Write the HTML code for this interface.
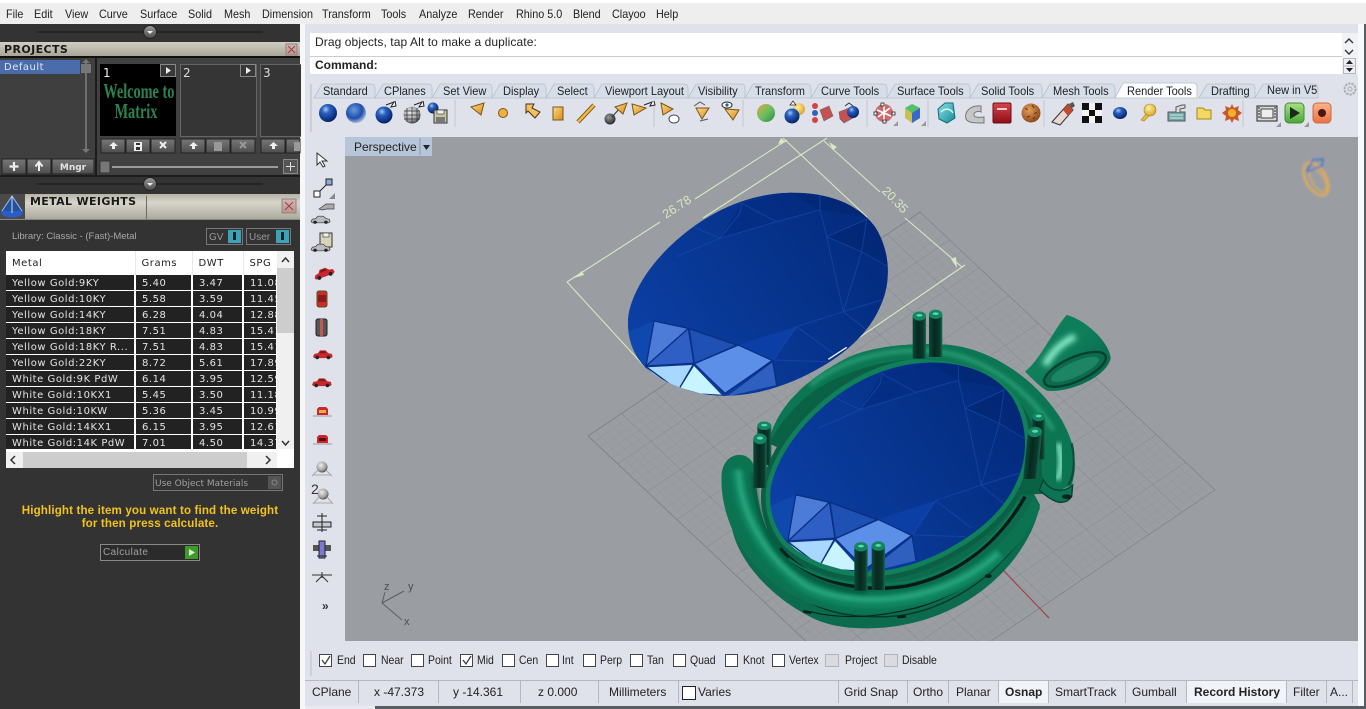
<!DOCTYPE html>
<html><head><meta charset="utf-8"><title>Rhino Matrix</title>
<style>
html,body{margin:0;padding:0;width:1366px;height:709px;overflow:hidden;background:#dfe2ea}
body{position:relative;font-family:"Liberation Sans",sans-serif;font-size:12px;color:#222}
.a{position:absolute}
.t{position:absolute;white-space:nowrap;line-height:14px}
.m{transform:scaleX(.9);transform-origin:0 50%}
.n{transform:scaleX(.92);transform-origin:0 50%}
.s{transform:scaleX(.87);transform-origin:0 50%}
.d{font-family:"DejaVu Sans",sans-serif}
svg{position:absolute;left:0;top:0}
table{border-collapse:collapse;table-layout:fixed;width:271px;font-family:"DejaVu Sans",sans-serif;font-size:10px;letter-spacing:.55px}
td,th{overflow:hidden;white-space:nowrap;text-align:left;font-weight:normal}
th{padding:2px 0 0 6px;height:22px;line-height:22px;background:#fff;color:#222;border-right:1px solid #e8e8e8}
td{padding:2px 0 0 6px;height:13px;line-height:13px;background:#222;color:#e4e4e4;border-right:2px solid #fff;border-bottom:1px solid #fff}
</style></head><body>

<div class="a" style="left:0;top:0;width:1366px;height:3px;background:#fff"></div>
<div class="a" style="left:0;top:3px;width:1366px;height:21px;background:#eeeeee"></div>
<span class="t m" style="left:6px;top:7px">File</span><span class="t m" style="left:34px;top:7px">Edit</span><span class="t m" style="left:65px;top:7px">View</span><span class="t m" style="left:99px;top:7px">Curve</span><span class="t m" style="left:140px;top:7px">Surface</span><span class="t m" style="left:188px;top:7px">Solid</span><span class="t m" style="left:224px;top:7px">Mesh</span><span class="t m" style="left:262px;top:7px">Dimension</span><span class="t m" style="left:322px;top:7px">Transform</span><span class="t m" style="left:381px;top:7px">Tools</span><span class="t m" style="left:419px;top:7px">Analyze</span><span class="t m" style="left:468px;top:7px">Render</span><span class="t m" style="left:516px;top:7px">Rhino 5.0</span><span class="t m" style="left:573px;top:7px">Blend</span><span class="t m" style="left:612px;top:7px">Clayoo</span><span class="t m" style="left:656px;top:7px">Help</span>

<!-- left panel -->
<div class="a" style="left:0;top:24px;width:300px;height:685px;background:#333"></div>
<div class="a" style="left:300px;top:24px;width:5px;height:685px;background:#f6f7f9"></div>
<div class="a" style="left:0;top:42px;width:300px;height:14px;background:linear-gradient(#d0cec2,#a9a698)"></div>
<div class="a" style="left:0;top:56px;width:300px;height:2px;background:#111"></div>
<span class="t d" style="left:4px;top:43px;font-weight:bold;font-size:11px;color:#1a1a1a;letter-spacing:.4px">PROJECTS</span>
<div class="a" style="left:0;top:58px;width:95px;height:117px;background:#3f3f3f"></div>
<div class="a" style="left:97px;top:58px;width:203px;height:117px;background:#414141"></div>
<div class="a" style="left:95px;top:58px;width:2px;height:118px;background:#1c1c1c"></div>
<div class="a" style="left:0;top:175px;width:300px;height:2px;background:#1c1c1c"></div>
<div class="a" style="left:0;top:60px;width:80px;height:14px;background:#4a6cab"></div>
<span class="t d" style="left:4px;top:61px;font-size:10px;color:#dfe6f4;letter-spacing:.5px">Default</span>
<!-- thumbnails -->
<div class="a" style="left:100px;top:64px;width:76px;height:72px;background:#000"></div>
<div class="a" style="left:180px;top:64px;width:75px;height:71px;background:#353535;border:1px solid #666"></div>
<div class="a" style="left:260px;top:64px;width:40px;height:71px;background:#353535;border:1px solid #666;border-right:0"></div>
<span class="t d" style="left:103px;top:66px;color:#eee;font-size:12px">1</span>
<span class="t d" style="left:183px;top:66px;color:#ddd;font-size:12px">2</span>
<span class="t d" style="left:263px;top:66px;color:#ddd;font-size:12px">3</span>
<span class="t" style="left:88px;top:81px;width:96px;text-align:center;font-family:'Liberation Serif',serif;font-weight:bold;font-size:21px;line-height:20px;color:#2a8452;transform:scaleX(.68)">Welcome to<br>Matrix</span>

<!-- metal weights -->
<div class="a" style="left:25px;top:194px;width:275px;height:25px;background:linear-gradient(#b5b2a6,#d8d6cc 35%,#aba89b)"></div>
<div class="a" style="left:0;top:219px;width:300px;height:1px;background:#888"></div>
<div class="a" style="left:146px;top:196px;width:1px;height:23px;background:#6e6c62"></div>
<span class="t d" style="left:30px;top:195px;font-weight:bold;font-size:11px;color:#1a1a1a;letter-spacing:.35px">METAL WEIGHTS</span>
<span class="t" style="left:12px;top:230px;font-size:9.5px;color:#a8a8a8">Library: Classic - (Fast)-Metal</span>
<div class="a" style="left:206px;top:228px;width:35px;height:15px;border:1px solid #777"></div>
<div class="a" style="left:246px;top:228px;width:43px;height:15px;border:1px solid #777"></div>
<span class="t" style="left:209px;top:231px;font-size:10px;color:#999">GV</span>
<span class="t" style="left:249px;top:231px;font-size:10px;color:#999">User</span>
<div class="a" style="left:228px;top:230px;width:13px;height:13px;background:#3aa3b5"></div>
<div class="a" style="left:276px;top:230px;width:13px;height:13px;background:#3aa3b5"></div>
<div class="a" style="left:233px;top:232px;width:3px;height:8px;background:#123"></div>
<div class="a" style="left:281px;top:232px;width:3px;height:8px;background:#123"></div>

<div class="a" style="left:6px;top:251px;width:288px;height:217px;background:#fff"></div>
<div class="a" style="left:6px;top:251px;width:271px;height:198px;overflow:hidden">
<table><colgroup><col style="width:129px"><col style="width:57px"><col style="width:51px"><col style="width:34px"></colgroup>
<tr><th>Metal</th><th>Grams</th><th>DWT</th><th>SPG</th></tr>
<tr><td>Yellow Gold:9KY</td><td>5.40</td><td>3.47</td><td>11.08</td></tr>
<tr><td>Yellow Gold:10KY</td><td>5.58</td><td>3.59</td><td>11.45</td></tr>
<tr><td>Yellow Gold:14KY</td><td>6.28</td><td>4.04</td><td>12.88</td></tr>
<tr><td>Yellow Gold:18KY</td><td>7.51</td><td>4.83</td><td>15.41</td></tr>
<tr><td>Yellow Gold:18KY R...</td><td>7.51</td><td>4.83</td><td>15.41</td></tr>
<tr><td>Yellow Gold:22KY</td><td>8.72</td><td>5.61</td><td>17.89</td></tr>
<tr><td>White Gold:9K PdW</td><td>6.14</td><td>3.95</td><td>12.59</td></tr>
<tr><td>White Gold:10KX1</td><td>5.45</td><td>3.50</td><td>11.18</td></tr>
<tr><td>White Gold:10KW</td><td>5.36</td><td>3.45</td><td>10.99</td></tr>
<tr><td>White Gold:14KX1</td><td>6.15</td><td>3.95</td><td>12.61</td></tr>
<tr><td>White Gold:14K PdW</td><td>7.01</td><td>4.50</td><td>14.37</td></tr>
</table></div>
<div class="a" style="left:277px;top:251px;width:17px;height:198px;background:#f0f0f0"></div>
<div class="a" style="left:277px;top:268px;width:17px;height:65px;background:#cdcdcd"></div>
<div class="a" style="left:6px;top:452px;width:271px;height:16px;background:#f0f0f0"></div>
<div class="a" style="left:23px;top:452px;width:224px;height:16px;background:#cdcdcd"></div>
<div class="a" style="left:153px;top:474px;width:128px;height:15px;border:1px solid #777"></div>
<span class="t d" style="left:155px;top:477px;font-size:9px;color:#a0a0a0">Use Object Materials</span>
<div class="a" style="left:268px;top:476px;width:13px;height:13px;background:#555"></div>
<span class="t" style="left:0;top:504px;width:300px;text-align:center;font-weight:bold;font-size:11.6px;line-height:13px;color:#f3c31c;white-space:normal;letter-spacing:.13px">Highlight the item you want to find the weight<br>for then press calculate.</span>
<div class="a" style="left:100px;top:544px;width:98px;height:15px;border:1px solid #888;background:#2b2b2b"></div>
<span class="t" style="left:103px;top:546px;font-size:10px;color:#a0a0a0;letter-spacing:.4px">Calculate</span>
<div class="a" style="left:185px;top:546px;width:13px;height:13px;background:#3f9a2c"></div>

<!-- command area -->
<div class="a" style="left:310px;top:33px;width:1048px;height:41px;background:#fff"></div>
<div class="a" style="left:310px;top:56px;width:1048px;height:1px;background:#c9ccd3"></div>
<div class="a" style="left:1342px;top:33px;width:16px;height:41px;background:#f1f2f5"></div>
<span class="t" style="left:315px;top:35px;letter-spacing:.09px">Drag objects, tap Alt to make a duplicate:</span>
<span class="t" style="left:315px;top:58px;font-weight:bold">Command:</span>

<!-- main graphics -->
<svg width="1366" height="709" viewBox="0 0 1366 709">
<defs>
<radialGradient id="bl" cx=".38" cy=".3" r=".75"><stop offset="0" stop-color="#a8c8f0"/><stop offset=".3" stop-color="#2a62c0"/><stop offset=".8" stop-color="#0c2f80"/><stop offset="1" stop-color="#051a4a"/></radialGradient>
<radialGradient id="bb" cx=".4" cy=".35" r=".7"><stop offset="0" stop-color="#6e98dd"/><stop offset=".6" stop-color="#1c4fae"/><stop offset="1" stop-color="#c0cce0"/></radialGradient>
<radialGradient id="gr" cx=".4" cy=".35" r=".7"><stop offset="0" stop-color="#eee"/><stop offset=".7" stop-color="#999"/><stop offset="1" stop-color="#333"/></radialGradient>
<radialGradient id="dk" cx=".4" cy=".35" r=".7"><stop offset="0" stop-color="#999"/><stop offset="1" stop-color="#222"/></radialGradient>
<linearGradient id="mc" x1="0" y1="0" x2="1" y2="1"><stop offset="0" stop-color="#e8a040"/><stop offset=".5" stop-color="#6cc060"/><stop offset="1" stop-color="#2a8a40"/></linearGradient>
<radialGradient id="br" cx=".4" cy=".35" r=".7"><stop offset="0" stop-color="#e2a060"/><stop offset="1" stop-color="#8a4414"/></radialGradient>
<radialGradient id="ye" cx=".4" cy=".35" r=".7"><stop offset="0" stop-color="#fff0a0"/><stop offset="1" stop-color="#d8a020"/></radialGradient>
<linearGradient id="or" x1="0" y1="0" x2="1" y2="1"><stop offset="0" stop-color="#f8dc8a"/><stop offset="1" stop-color="#d88a18"/></linearGradient>
<linearGradient id="pk" x1="0" y1="0" x2="0" y2="1"><stop offset="0" stop-color="#d8b4b0"/><stop offset="1" stop-color="#c48f8a"/></linearGradient>
<linearGradient id="kn" x1="0" y1="0" x2="0" y2="1"><stop offset="0" stop-color="#9a9a9a"/><stop offset="1" stop-color="#4a4a4a"/></linearGradient>
<linearGradient id="bt" x1="0" y1="0" x2="0" y2="1"><stop offset="0" stop-color="#777"/><stop offset="1" stop-color="#4d4d4d"/></linearGradient>
<linearGradient id="bale" x1="0" y1="0" x2="1" y2="1"><stop offset="0" stop-color="#0c7a58"/><stop offset=".45" stop-color="#0f7f5a"/><stop offset="1" stop-color="#0a5f45"/></linearGradient>
<linearGradient id="teal" x1="0" y1="0" x2="1" y2="1"><stop offset="0" stop-color="#8ee0e4"/><stop offset="1" stop-color="#128a98"/></linearGradient>
<linearGradient id="red" x1="0" y1="0" x2="0" y2="1"><stop offset="0" stop-color="#d8444c"/><stop offset="1" stop-color="#8a1018"/></linearGradient>
<linearGradient id="grb" x1="0" y1="0" x2="0" y2="1"><stop offset="0" stop-color="#a8e088"/><stop offset="1" stop-color="#48a838"/></linearGradient>
<linearGradient id="orb" x1="0" y1="0" x2="0" y2="1"><stop offset="0" stop-color="#fbb48c"/><stop offset="1" stop-color="#ec7040"/></linearGradient>
<linearGradient id="pr" x1="0" y1="0" x2="1" y2="0"><stop offset="0" stop-color="#0a4a38"/><stop offset=".4" stop-color="#08281f"/><stop offset=".8" stop-color="#0a3a2c"/><stop offset="1" stop-color="#186a52"/></linearGradient>
<linearGradient id="gb" gradientUnits="userSpaceOnUse" x1="250" y1="700" x2="950" y2="250"><stop offset="0" stop-color="#0c3fa6"/><stop offset=".5" stop-color="#07358f"/><stop offset="1" stop-color="#032a7c"/></linearGradient>
<pattern id="g1" width="2" height="2" patternUnits="userSpaceOnUse"><path d="M0 0H2M0 0V2" stroke="#868a8f" stroke-width=".1" fill="none"/></pattern>
<pattern id="g2" width="10" height="10" patternUnits="userSpaceOnUse"><path d="M0 0H10M0 0V10" stroke="#777b80" stroke-width=".14" fill="none"/></pattern>
<filter id="b2" x="-30%" y="-30%" width="160%" height="160%"><feGaussianBlur stdDeviation="9"/></filter>
<filter id="b1" x="-30%" y="-30%" width="160%" height="160%"><feGaussianBlur stdDeviation="6"/></filter>
<filter id="s1"><feGaussianBlur stdDeviation="1"/></filter>
<clipPath id="vp"><rect x="345" y="137" width="1013" height="504"/></clipPath>
<path id="gout" d="M690,188 C790,185 890,215 945,290 C990,360 995,450 965,520 C930,610 850,680 740,735 C650,780 560,800 480,797 C400,795 310,760 255,712 C215,670 198,610 205,555 C220,470 290,370 400,290 C490,225 590,190 690,188Z"/>
<clipPath id="gc"><path d="M690,188 C790,185 890,215 945,290 C990,360 995,450 965,520 C930,610 850,680 740,735 C650,780 560,800 480,797 C400,795 310,760 255,712 C215,670 198,610 205,555 C220,470 290,370 400,290 C490,225 590,190 690,188Z"/></clipPath>
<g id="gem"><g clip-path="url(#gc)">
<use href="#gout" fill="url(#gb)"/>
<polygon points="545,220 690,188 780,240 650,275 480,325" fill="#032c80" opacity=".6"/>
<polygon points="690,188 780,197 880,220 920,262 780,240" fill="#02266f" opacity=".6"/>
<polygon points="800,320 920,268 905,365" fill="#02256f" opacity=".6"/>
<polygon points="920,262 990,320 990,420 905,365" fill="#02266f" opacity=".5"/>
<polygon points="282,573 385,595 258,708" fill="#4c7cd8"/>
<polygon points="385,595 400,698 258,708" fill="#2f5fc4"/>
<polygon points="282,573 258,708 215,670 195,610" fill="#0f49ae"/>
<polygon points="390,597 525,645 405,698" fill="#1f50b4"/>
<polygon points="535,645 635,690 495,790 405,700" fill="#5b8fe8"/>
<polygon points="637,697 650,765 500,800" fill="#2f60c0"/>
<polygon points="258,712 398,705 358,775 300,750" fill="#a8d8ff"/>
<polygon points="402,708 490,800 420,800 360,775" fill="#c8f4ff"/>
<polygon points="530,645 710,590 640,690" fill="#0c3fa6"/>
<g fill="none" stroke="#1a4fb6" stroke-width="3" opacity=".6">
<path d="M545,220 650,275 780,240 780,197M650,275 480,325 400,290M780,240 800,320 920,268 905,365 800,320M905,365 850,545 710,590 820,670M850,545 965,510M905,365 983,410M545,220 540,250 480,325 350,380M800,320 850,545M710,590 640,690 800,695M850,545 920,600"/>
</g>
<g fill="none" stroke="#0b2f80" stroke-width="4">
<path d="M282,573 258,708 402,700 385,595 282,573M385,595 258,708M402,700 360,772M402,702 495,790 638,692 650,765M405,700 535,645 638,692M385,595 530,645M258,710 340,770 420,792 500,797"/>
</g></g>
</g>
<g id="prong"><rect x="0" y="8" width="40" height="130" fill="url(#pr)"/><ellipse cx="20" cy="10" rx="20" ry="14" fill="#148562"/><ellipse cx="20" cy="8" rx="9" ry="4" fill="#5ed6ad"/></g>
<g id="car"><path d="M0 11 2 7 7 6 10 2H18L22 6 27 7 28 11 26 13H2Z" fill="#c8282c"/><path d="M11 3H17L19 6H9Z" fill="#7a1a1a"/><circle cx="6" cy="12" r="2.6" fill="#222"/><circle cx="22" cy="12" r="2.6" fill="#222"/></g>
</defs>

<!-- viewport -->
<rect x="345" y="137" width="1013" height="504" fill="#9a9ea3"/>
<rect x="345" y="137" width="87" height="19" fill="#b7c5d8"/>
<g clip-path="url(#vp)">
<g transform="matrix(3.32,-2.24,2.95,2.78,588,436)"><rect width="100" height="100" fill="url(#g1)"/><rect width="100" height="100" fill="url(#g2)"/><path d="M0 0H100V100H0Z" fill="none" stroke="#777b80" stroke-width=".14"/></g>
<line x1="1003" y1="570" x2="1049" y2="618" stroke="#a4403e" stroke-width="1.2"/>
<!-- dims -->
<g stroke="#d6e9bf" stroke-width="1.1" fill="none">
<path d="M567,282 660,222M695,199 787,140M567,282 645,367M783,138 867,217M827,138 703,218M824,141 880,192M905,218 962,267M965,265 828,359"/>
</g>
<path d="M574,278l8,-7 2,4zM786,142l-8,2 3,-6zM829,142l8,5 -4,3zM957,268l-6,-9 5,-2z" fill="#d6e9bf"/>
<g transform="translate(560,130) scale(.33333)"><use href="#gem"/><path d="M805,688 L860,652" stroke="#f2f6ff" stroke-width="4"/></g>
<text x="677" y="211" transform="rotate(-33 677 207)" font-family="Liberation Sans,sans-serif" font-size="12.5" fill="#d6e9bf" text-anchor="middle">26.78</text>
<text x="895" y="204" transform="rotate(46 895 200)" font-family="Liberation Sans,sans-serif" font-size="12.5" fill="#d6e9bf" text-anchor="middle">20.35</text>

<!-- pendant, drawn in 3x crop coordinates -->
<g transform="translate(700,300) scale(.33333)">
<!-- bale -->
<path d="M975,215 C1020,180 1060,90 1100,45 C1160,60 1230,130 1232,175 C1220,230 1110,280 1040,272 C1020,260 1000,240 975,215Z" fill="url(#bale)"/>
<ellipse cx="1125" cy="208" rx="100" ry="36" transform="rotate(-24 1125 208)" fill="#0c6b4d" stroke="#06402e" stroke-width="7"/>
<ellipse cx="1125" cy="208" rx="78" ry="22" transform="rotate(-24 1125 208)" fill="#1d8563"/>
<path d="M1035,195 C1060,150 1090,125 1125,110" stroke="#8ff0cc" stroke-width="20" fill="none" filter="url(#b2)"/>
<!-- back silhouettes -->
<path d="M95,680 C110,770 200,890 350,960 C400,980 450,985 500,985 C640,985 790,935 900,825 C960,765 1005,690 1020,615 L990,560 L500,700Z" fill="#0c6b4c"/>
<path d="M205,430 C225,340 290,250 450,170 C530,135 650,128 750,135 C880,150 1010,240 1085,360 C1100,400 1100,500 1060,580 L600,600Z" fill="#0a6245"/>
<path d="M250,850 C330,925 420,955 560,950 C700,945 860,860 960,720" fill="none" stroke="#06352a" stroke-width="4"/>
<path d="M640,925 C740,900 860,830 925,750" fill="none" stroke="#052018" stroke-width="5"/>
<!-- bezel -->
<g transform="matrix(.98,0,0,1.03,11,-6)"><use href="#gout" fill="#06261d" stroke="#0a5f45" stroke-width="56" stroke-linejoin="round"/>
<use href="#gout" fill="none" stroke="#117f5a" stroke-width="28" stroke-linejoin="round"/></g>
<path d="M240,745 C330,850 480,880 620,858 C760,830 890,740 975,590" fill="none" stroke="#041a14" stroke-width="10"/>
<path d="M265,775 C350,842 480,868 620,846 C760,820 880,735 955,605" fill="none" stroke="#0d7a57" stroke-width="6"/>
<g transform="matrix(.98,0,0,1.03,11,-6)"><use href="#gem"/></g>
<!-- top tube -->
<path d="M205,430 C225,340 290,250 450,170 C530,135 650,128 750,135 C880,150 1010,240 1085,360 C1125,430 1135,490 1115,555 L1060,580 C1035,560 1022,530 1025,500 C1030,440 1000,330 900,240 C830,190 720,178 640,178 C520,185 400,225 320,290 C260,340 225,400 205,430Z" fill="#0c7652"/>
<path d="M330,255 C430,175 560,148 680,152 C840,160 980,260 1060,390" fill="none" stroke="#34b288" stroke-width="12" filter="url(#b1)" opacity=".7"/>
<path d="M1075,430 C1085,470 1085,510 1072,540" fill="none" stroke="#8cefc9" stroke-width="14" filter="url(#b1)"/>
<path d="M1115,430 C1128,490 1120,530 1105,555" fill="none" stroke="#075039" stroke-width="7" filter="url(#s1)"/>
<path d="M1018,570 C1050,600 1090,625 1115,590 L1118,555 C1090,580 1050,575 1030,540Z" fill="#0c7354" stroke="#06402e" stroke-width="4"/>
<ellipse cx="1100" cy="590" rx="14" ry="7" fill="#05241b"/>
<!-- crescent tube -->
<path d="M112,465 C140,462 160,480 165,510 C170,590 180,650 210,705 C240,770 300,835 400,862 C470,880 560,880 640,865 C730,850 830,795 900,730 C950,680 985,630 1000,590 L1020,625 C980,720 900,800 800,860 C700,915 590,945 480,942 C340,935 210,870 130,750 C85,680 60,600 65,520 C70,485 90,468 112,465Z" fill="#0c7351"/>
<path d="M112,510 C120,640 195,780 320,862 C420,912 540,915 650,890 C740,870 830,825 900,760" fill="none" stroke="#0f8660" stroke-width="40" filter="url(#b1)"/>
<path d="M115,510 C122,640 195,775 320,858 C420,906 540,908 650,884 C740,865 830,820 895,760" fill="none" stroke="#3cba8f" stroke-width="11" filter="url(#b1)" opacity=".8"/>
<path d="M158,520 C168,610 185,690 240,760 C300,830 390,868 500,876" fill="none" stroke="#075039" stroke-width="9" filter="url(#b1)"/>
<path d="M330,935 C420,958 520,955 640,925" fill="none" stroke="#052018" stroke-width="3"/>
<rect x="310" y="932" width="24" height="8" transform="rotate(10 322 934)" fill="#052018"/><rect x="592" y="946" width="26" height="8" transform="rotate(-5 605 950)" fill="#052018"/>
<ellipse cx="865" cy="828" rx="10" ry="6" fill="#052018"/>
<!-- prongs -->
<use href="#prong" transform="translate(638,38)"/><use href="#prong" transform="translate(687,33)"/>
<use href="#prong" transform="translate(172,368) scale(1.05,.92)"/><use href="#prong" transform="translate(160,405) scale(1,1.15)"/>
<use href="#prong" transform="translate(997,340) scale(.95,1)"/><use href="#prong" transform="translate(985,385) scale(1.05,1.1) skewX(-6)"/>
<use href="#prong" transform="translate(463,730) scale(1,1.03)"/><use href="#prong" transform="translate(515,728) scale(1,1.03)"/>
</g>

<!-- ring gizmo -->
<g fill="none" stroke-linecap="round" filter="url(#s1)" transform="translate(0,0)">
<ellipse cx="1316" cy="179" rx="10" ry="18" transform="rotate(-30 1316 179)" stroke="#dcab5e" stroke-width="2.6"/>
<ellipse cx="1318" cy="180" rx="6" ry="13" transform="rotate(-30 1318 180)" stroke="#dcab5e" stroke-width="1.6"/>
<path d="M1307,171 1313,160 1323,159 1322,166 1309,171Z" stroke="#4a7dc4" stroke-width="1.8"/>
</g>
<!-- xyz gizmo -->
<g stroke="#5b5e62" stroke-width="1" fill="none"><path d="M382,603 385,592M382,603 404,591M382,603 402,620"/></g>
<g font-family="Liberation Sans,sans-serif" font-size="11" fill="#4a4d52"><text x="384" y="590">z</text><text x="408" y="590">y</text><text x="404" y="625">x</text></g>
</g>
<line x1="420" y1="138" x2="420" y2="155" stroke="#8b98ab"/><path d="M423,145h7l-3.500,5z" fill="#223"/>

<!-- tab bar -->
<g fill="#d6deea" stroke="#b9c0cc" stroke-width=".8">
<path d="M314,98 322,84H371Q375,84 375,88V98Z"/><path d="M375,98 383,84H428Q432,84 432,88V98Z"/><path d="M432,98 440,84H488Q492,84 492,88V98Z"/><path d="M492,98 500,84H542Q546,84 546,88V98Z"/><path d="M546,98 554,84H590Q594,84 594,88V98Z"/><path d="M594,98 602,84H684Q688,84 688,88V98Z"/><path d="M688,98 696,84H741Q745,84 745,88V98Z"/><path d="M745,98 753,84H807Q811,84 811,88V98Z"/><path d="M811,98 819,84H883Q887,84 887,88V98Z"/><path d="M887,98 895,84H966Q970,84 970,88V98Z"/><path d="M970,98 978,84H1038Q1042,84 1042,88V98Z"/><path d="M1042,98 1050,84H1111Q1115,84 1115,88V98Z"/><path d="M1199,98 1207,84H1251Q1255,84 1255,88V98Z"/><path d="M1255,98 1263,84H1314Q1318,84 1318,88V98Z"/>
<path d="M1115,98 1123,83H1193Q1197,83 1197,87V98Z" fill="#fbfcfe"/>
</g>
<circle cx="1350" cy="89" r="5.500" fill="none" stroke="#a8acb3" stroke-width="2" stroke-dasharray="2.400 1"/><circle cx="1350" cy="89" r="2" fill="none" stroke="#a8acb3"/>
<line x1="311" y1="84" x2="311" y2="132" stroke="#b8bcc5"/>
<g stroke="#c2c6cf"><line x1="455" y1="100" x2="455" y2="127"/><line x1="654" y1="100" x2="654" y2="127"/><line x1="743" y1="100" x2="743" y2="127"/><line x1="867" y1="100" x2="867" y2="127"/><line x1="928" y1="100" x2="928" y2="127"/><line x1="1044" y1="100" x2="1044" y2="127"/><line x1="1243" y1="100" x2="1243" y2="127"/></g>

<!-- toolbar icons -->
<circle cx="328" cy="113" r="9" fill="url(#bl)"/>
<circle cx="356" cy="113" r="10" fill="url(#bb)"/>
<circle cx="384" cy="115" r="8.5" fill="url(#bl)"/><path d="M386,105 394,102 391,107 396,106 395,101" stroke="#222" fill="#fff"/>
<circle cx="412" cy="115" r="8.5" fill="url(#gr)"/><path d="M404,115H420M404,111H420M404,119H420M412,107V123M407,108V122M417,108V122" stroke="#333" stroke-width=".7"/><path d="M414,105 422,102 419,107 424,106 423,101" stroke="#222" fill="#fff"/>
<circle cx="433" cy="108" r="5.5" fill="url(#bl)"/><rect x="434" y="110" width="13" height="13" fill="#c9c4a2" stroke="#333"/><rect x="437" y="110" width="7" height="4" fill="#eee" stroke="#333" stroke-width=".6"/><rect x="436" y="117" width="9" height="6" fill="#777"/>
<polygon points="471,107 484,103 481,115" fill="url(#or)" stroke="#7a5414"/>
<circle cx="503" cy="113" r="4.5" fill="#f0b040" stroke="#7a5414"/>
<path d="M526,113 V104 H534 L532,108 540,112 535,118 528,111Z" fill="#f2c060" stroke="#4a3410"/>
<rect x="553" y="107" width="10" height="13" fill="url(#or)" stroke="#7a5414"/>
<path d="M578,122 594,105" stroke="#7a5414" stroke-width="4.4"/><path d="M578,122 594,105" stroke="#f2b840" stroke-width="2.6"/>
<circle cx="610" cy="119" r="5.5" fill="url(#dk)"/><path d="M612,117 620,108" stroke="#333"/><polygon points="615,107 627,103 623,114" fill="url(#or)" stroke="#7a5414"/>
<polygon points="632,104 646,108 634,115" fill="url(#or)" stroke="#7a5414"/><path d="M644,105 652,102 650,106 655,105 654,101" stroke="#222" fill="#fff"/>
<polygon points="661,103 673,109 663,115" fill="url(#or)" stroke="#7a5414"/><ellipse cx="674" cy="119" rx="5" ry="4" fill="#fff" stroke="#444"/>
<polygon points="696,108 709,108 702,119" fill="url(#or)" stroke="#7a5414"/><path d="M694,106 700,102 705,105" fill="none" stroke="#555"/><path d="M700,121 708,119" stroke="#555"/>
<polygon points="725,109 739,110 733,120" fill="url(#or)" stroke="#7a5414"/><ellipse cx="727" cy="105" rx="5" ry="3" fill="#fff" stroke="#222"/><circle cx="727" cy="105" r="1.6" fill="#2a5aa0"/>
<circle cx="766" cy="113" r="9" fill="url(#mc)"/>
<circle cx="799" cy="109" r="6" fill="url(#ye)"/><circle cx="792" cy="116" r="7.5" fill="url(#bl)"/><path d="M790,105 793,101 796,105Z" fill="#fff" stroke="#222" stroke-width=".7"/>
<circle cx="815" cy="106" r="3" fill="#d84040"/><circle cx="815" cy="113" r="3" fill="#3060c0"/><circle cx="815" cy="120" r="3" fill="#d84040"/><path d="M820,110 829,106 833,116 824,121Z" fill="#c85050" stroke="#666" stroke-width=".6"/>
<path d="M839,112 849,108 853,118 844,123 840,119Z" fill="#c85050" stroke="#666" stroke-width=".6"/><circle cx="853" cy="112" r="6" fill="url(#bl)"/><path d="M845,106 849,103 853,106" fill="none" stroke="#333"/>
<circle cx="884" cy="113" r="9" fill="#d06a6a"/><path d="M877,110 891,116M878,117 890,108M884,104V122" stroke="#fff" stroke-width="1.6"/><g fill="#fff" stroke="#222" stroke-width=".8"><rect x="881" y="103" width="3" height="3"/><rect x="892" y="112" width="3" height="3"/><rect x="883" y="120" width="3" height="3"/><rect x="874" y="112" width="3" height="3"/></g><path d="M893,126h5v-5z" fill="#999"/>
<path d="M905,108 912,104 920,108V118L912,123 905,118Z" fill="#c8c050"/><path d="M912,104 920,108 912,113 905,108Z" fill="#50c070"/><path d="M912,113V123L920,118V108Z" fill="#3868c8"/><path d="M921,126h5v-5z" fill="#999"/>
<path d="M938,109 945,103H953L955,118 947,123 939,119Z" fill="url(#teal)" stroke="#0e6f7c"/><path d="M941,112C945,108 950,108 953,113" stroke="#d8fafa" stroke-width="1.5" fill="none"/>
<path d="M981,106C970,105 964,112 966,119 968,123 975,123 984,123V117C977,118 973,117 974,114 975,111 980,111 981,112Z" fill="#c6c6c6" stroke="#777"/>
<rect x="993" y="103" width="18" height="20" rx="1.5" fill="url(#red)" stroke="#6c0c12"/><rect x="997" y="108" width="10" height="2" fill="#f3d0d0"/>
<circle cx="1031" cy="113" r="9.5" fill="url(#br)"/><path d="M1025,108l3,2M1032,105l2,3M1037,112l-3,2M1027,117l3,-1M1033,119l2,-2" stroke="#6a3008"/>
<path d="M1052,122 1068,104 1073,110 1060,125Z" fill="#e8d8d0" stroke="#333"/><path d="M1063,110 1068,104 1073,110 1068,116Z" fill="#c04c30"/><path d="M1069,104 1073,102 1075,106 1072,108Z" fill="#555"/>
<rect x="1082" y="103" width="20" height="20" fill="#f4f4f4"/><path d="M1082,103h7v7h-7zM1095,103h7v7h-7zM1089,110h6v6h-6zM1082,116h7v7h-7zM1095,116h7v7h-7z" fill="#111"/>
<ellipse cx="1120" cy="113" rx="7" ry="6" fill="url(#bl)"/>
<circle cx="1150" cy="110" r="6" fill="url(#ye)" stroke="#a88018" stroke-width=".6"/><path d="M1146,114 1141,120 1144,121 1149,116Z" fill="#e8c040" stroke="#a88018" stroke-width=".6"/>
<rect x="1168" y="112" width="17" height="9" fill="#70a8a8" stroke="#555"/><path d="M1176,112V107L1182,105H1185V108L1180,109V112" fill="#ddd" stroke="#555"/><path d="M1170,115H1183M1170,118H1183" stroke="#dcecec"/>
<path d="M1197,108H1203L1205,110H1211V119H1197Z" fill="#f5d860" stroke="#a48818"/>
<path d="M1232,104 1234,108 1239,106 1238,110 1242,113 1238,116 1239,121 1234,119 1232,123 1230,119 1225,121 1226,116 1222,113 1226,110 1225,106 1230,108Z" fill="#c85a28"/><circle cx="1232" cy="113" r="4" fill="#f0b030"/>
<rect x="1257" y="106" width="20" height="15" fill="#d8d8d8" stroke="#222"/><rect x="1261" y="109" width="12" height="9" fill="#eee" stroke="#444"/><path d="M1258,108H1260M1258,111H1260M1258,114H1260M1258,117H1260M1274,108H1276M1274,111H1276M1274,114H1276M1274,117H1276" stroke="#222"/><path d="M1276,127h5v-5z" fill="#999"/>
<rect x="1285" y="103" width="19" height="20" rx="4" fill="url(#grb)" stroke="#468a32"/><path d="M1290,107 1300,113 1290,119Z" fill="#1a2a14"/><path d="M1304,127h5v-5z" fill="#999"/>
<rect x="1313" y="103" width="18" height="20" rx="4" fill="url(#orb)" stroke="#c86a40"/><circle cx="1322" cy="113" r="4" fill="#4a1810"/>

<!-- left toolbar -->
<path d="M317,153V165L320,162 323,167 325,166 322,161H327Z" fill="#fff" stroke="#333"/>
<rect x="314" y="191" width="6" height="6" fill="#fff" stroke="#222"/><rect x="326" y="179" width="6" height="6" fill="#8fa8e0" stroke="#222"/><path d="M320,191 326,185" stroke="#222"/><path d="M329,199h6v-6z" fill="#888"/>
<path d="M319,209 326,204H334V209H327L322,210Z" fill="#aaa" stroke="#444" stroke-width=".7"/>
<g transform="translate(311,215) scale(.68,.6)"><path d="M0 11 2 7 7 6 10 2H18L22 6 27 7 28 11 26 13H2Z" fill="#b9bcc0" stroke="#333"/><circle cx="6" cy="12" r="2.6" fill="#222"/><circle cx="22" cy="12" r="2.6" fill="#222"/></g>
<rect x="320" y="233" width="12" height="14" fill="#d8d3ba" stroke="#333"/><rect x="323" y="233" width="6" height="4" fill="#f0f0f0" stroke="#333" stroke-width=".6"/>
<g transform="translate(311,243) scale(.68,.6)"><path d="M0 11 2 7 7 6 10 2H18L22 6 27 7 28 11 26 13H2Z" fill="#b9bcc0" stroke="#333"/><circle cx="6" cy="12" r="2.6" fill="#222"/><circle cx="22" cy="12" r="2.6" fill="#222"/></g>
<use href="#car" transform="translate(312,271) rotate(-20 0 0) scale(.75)"/>
<rect x="317" y="291" width="10" height="16" rx="2" fill="#cc2a2e" stroke="#551"/><rect x="318" y="295" width="8" height="7" fill="#8a1a1a"/>
<rect x="316" y="319" width="11" height="17" rx="2" fill="#555" stroke="#222"/><rect x="320" y="319" width="3" height="17" fill="#c05858"/>
<use href="#car" transform="translate(313,349) scale(.7)"/><use href="#car" transform="translate(312,377) scale(.7)"/>
<path d="M317,415V409L319,407H326L328,409V415Z" fill="#c8282c"/><rect x="319" y="410" width="7" height="3" fill="#e8b040"/><line x1="313" y1="416" x2="332" y2="416" stroke="#999"/>
<path d="M317,443V437L319,435H326L328,437V443Z" fill="#c8282c"/><rect x="319" y="438" width="7" height="3" fill="#5a1010"/><line x1="313" y1="444" x2="332" y2="444" stroke="#999"/>
<circle cx="322" cy="467" r="5.5" fill="url(#gr)"/><path d="M312,476 318,470M332,476 326,470M313,475H331" stroke="#aaa"/>
<circle cx="323" cy="494" r="5.5" fill="url(#gr)"/><path d="M313,504 319,497M333,504 327,497M313,503H333" stroke="#aaa"/>
<text x="311" y="494" font-family="Liberation Sans,sans-serif" font-size="14" fill="#333">2</text>
<path d="M317,516H327M322,513V532M313,522H331V527H313ZM317,530H327" stroke="#222" fill="#c4c8d0"/>
<path d="M313,545H331V551H313Z" fill="#555"/><rect x="319" y="541" width="6" height="17" fill="#7a7ad0" stroke="#222"/><path d="M317,556H327" stroke="#222"/>
<path d="M312,575H332M316,582 322,576 328,582M322,572V578" stroke="#333" fill="none"/>
<text x="322" y="610" font-family="Liberation Sans,sans-serif" font-size="12" font-weight="bold" fill="#333">»</text>

<!-- command scrollers -->
<path d="M1345,43 1349,39 1353,43M1345,50 1349,54 1353,50" fill="none" stroke="#333" stroke-width="1.4"/>
<rect x="1343.500" y="58.500" width="12" height="15" fill="#eef0f4" stroke="#b5b8c0"/><line x1="1343" y1="66" x2="1356" y2="66" stroke="#b5b8c0"/>
<path d="M1346,64 1349.500,60 1353,64ZM1346,68 1349.500,72 1353,68Z" fill="#222"/>

<!-- left panel SVG -->
<g stroke="#151515"><line x1="37" y1="32" x2="263" y2="32"/><line x1="37" y1="184" x2="263" y2="184"/></g>
<circle cx="150" cy="32" r="6.5" fill="url(#kn)" stroke="#222"/><circle cx="150" cy="184" r="6.5" fill="url(#kn)" stroke="#222"/>
<path d="M147,31h6l-3,3zM147,183h6l-3,3z" fill="#eee"/>
<rect x="286" y="44" width="11" height="11" fill="url(#pk)" stroke="#888"/><path d="M288,46 295,53M295,46 288,53" stroke="#8a4a4a"/>
<rect x="282" y="199" width="14" height="14" fill="url(#pk)" stroke="#888"/><path d="M285,202 293,210M293,202 285,210" stroke="#8a4a4a"/>
<line x1="86" y1="62" x2="86" y2="150" stroke="#6f6f6f" stroke-width="2"/><rect x="81" y="64" width="10" height="9" fill="#777"/><path d="M82,63 86,59 90,63ZM82,149 86,153 90,149Z" fill="#777"/>
<g fill="url(#bt)" stroke="#222"><rect x="2" y="159" width="24" height="15"/><rect x="27" y="159" width="24" height="15"/><rect x="52" y="159" width="42" height="15"/></g>
<path d="M14,162V171M9.5,166.5H18.5" stroke="#eee" stroke-width="2.2"/><path d="M39,171V163M35.500,166.500 39,162 42.500,166.500" stroke="#eee" stroke-width="2" fill="none"/>
<text x="73" y="170" text-anchor="middle" font-family="DejaVu Sans,sans-serif" font-weight="bold" font-size="9" fill="#e4e4e4">Mngr</text>
<g fill="url(#bt)" stroke="#222"><rect x="101" y="139" width="24" height="14"/><rect x="126" y="139" width="24" height="14"/><rect x="151" y="139" width="24" height="14"/><rect x="181" y="139" width="24" height="14"/><rect x="206" y="139" width="24" height="14"/><rect x="231" y="139" width="24" height="14"/><rect x="261" y="139" width="24" height="14"/><rect x="286" y="139" width="14" height="14"/></g>
<g fill="#eee"><path d="M109,146 113.500,142 118,146H115V149H112V146Z"/><path d="M189,146 193.500,142 198,146H195V149H192V146Z"/><path d="M269,146 273.500,142 278,146H275V149H272V146Z"/><rect x="134" y="142" width="8" height="9"/></g><rect x="214" y="142" width="8" height="9" fill="#999"/><rect x="294" y="142" width="6" height="9" fill="#999"/>
<path d="M160,142 166,148M166,142 160,148" stroke="#eee" stroke-width="2"/><path d="M240,142 246,148M246,142 240,148" stroke="#999" stroke-width="2"/>
<rect x="136" y="143" width="4" height="2" fill="#333"/><rect x="136" y="147" width="4" height="3" fill="#333"/>
<g fill="#383838" stroke="#888"><rect x="160.500" y="64.500" width="15" height="12"/><rect x="240.500" y="64.500" width="15" height="12"/></g><path d="M166,67 171,70.500 166,74ZM246,67 251,70.500 246,74Z" fill="#eee"/>
<line x1="112" y1="167" x2="278" y2="167" stroke="#9a9a9a" stroke-width="2"/><rect x="100" y="161" width="10" height="12" fill="#777" stroke="#333"/>
<rect x="283.500" y="159.500" width="14" height="14" fill="#555" stroke="#888"/><path d="M290.500,162V171M286,166.500H295" stroke="#ddd"/>
<!-- metal icon -->
<rect x="0" y="194" width="25" height="25" fill="#4a4a4a"/><ellipse cx="12" cy="212" rx="11" ry="5.500" fill="#2a5dc8"/><path d="M2,211 12,196 22,211" fill="#244e9e" stroke="#9cc0f0"/><line x1="12" y1="196" x2="12" y2="213" stroke="#cde"/>
<!-- table arrows -->
<g fill="none" stroke="#333" stroke-width="1.5"><path d="M282,262 285.500,258 289,262M282,441 285.500,445 289,441M15,456 11,460 15,464M266,456 270,460 266,464"/></g>
<circle cx="274.500" cy="482.500" r="2.500" fill="none" stroke="#888"/>
<path d="M189,549 195,552.500 189,556Z" fill="#d8f0c8"/>

<!-- snap checkboxes -->
<line x1="311" y1="651" x2="311" y2="676" stroke="#bcc0c8"/>
<g fill="#fff" stroke="#444"><rect x="319.500" y="654.500" width="12" height="12"/><rect x="363.500" y="654.500" width="12" height="12"/><rect x="411.500" y="654.500" width="12" height="12"/><rect x="460.500" y="654.500" width="12" height="12"/><rect x="502.500" y="654.500" width="12" height="12"/><rect x="546.500" y="654.500" width="12" height="12"/><rect x="583.500" y="654.500" width="12" height="12"/><rect x="630.500" y="654.500" width="12" height="12"/><rect x="673.500" y="654.500" width="12" height="12"/><rect x="725.500" y="654.500" width="12" height="12"/><rect x="772.500" y="654.500" width="12" height="12"/></g>
<g fill="#d9dbdf" stroke="#b0b3ba"><rect x="825.500" y="654.500" width="13" height="12"/><rect x="884.500" y="654.500" width="13" height="12"/></g>
<path d="M322,660 325,664 330,656M463,660 466,664 471,656" fill="none" stroke="#333" stroke-width="1.2"/>
<!-- status -->
<line x1="305" y1="680.500" x2="1358" y2="680.500" stroke="#b4b8c0"/>
<rect x="999" y="681" width="49" height="22" fill="#f0f4f9"/><rect x="1187" y="681" width="99" height="22" fill="#f0f4f9"/>
<g stroke="#b4b8c0"><line x1="358.500" y1="681" x2="358.500" y2="703"/><line x1="438.500" y1="681" x2="438.500" y2="703"/><line x1="520.500" y1="681" x2="520.500" y2="703"/><line x1="598.500" y1="681" x2="598.500" y2="703"/><line x1="678.500" y1="681" x2="678.500" y2="703"/><line x1="838.500" y1="681" x2="838.500" y2="703"/><line x1="907.500" y1="681" x2="907.500" y2="703"/><line x1="948.500" y1="681" x2="948.500" y2="703"/><line x1="998.500" y1="681" x2="998.500" y2="703"/><line x1="1048.500" y1="681" x2="1048.500" y2="703"/><line x1="1125.500" y1="681" x2="1125.500" y2="703"/><line x1="1186.500" y1="681" x2="1186.500" y2="703"/><line x1="1286.500" y1="681" x2="1286.500" y2="703"/><line x1="1326.500" y1="681" x2="1326.500" y2="703"/><line x1="1352.500" y1="681" x2="1352.500" y2="703"/></g>
<rect x="682.500" y="686.500" width="13" height="13" fill="#fff" stroke="#222"/>
<rect x="375" y="706" width="989" height="3" fill="#5a5d63"/>
<rect x="305" y="706" width="70" height="3" fill="#e8eaee"/>
<rect x="1358" y="24" width="6" height="682" fill="#f8f9fb"/><rect x="1364" y="24" width="2" height="685" fill="#5a5d63"/>
</svg>

<span class="t" style="left:354px;top:140px;color:#222">Perspective</span>
<!-- tab text -->
<span class="t n" style="left:323px;top:84px">Standard</span><span class="t n" style="left:384px;top:84px">CPlanes</span><span class="t n" style="left:443px;top:84px">Set View</span><span class="t n" style="left:503px;top:84px">Display</span><span class="t n" style="left:557px;top:84px">Select</span><span class="t n" style="left:605px;top:84px">Viewport Layout</span><span class="t n" style="left:698px;top:84px">Visibility</span><span class="t n" style="left:755px;top:84px">Transform</span><span class="t n" style="left:821px;top:84px">Curve Tools</span><span class="t n" style="left:897px;top:84px">Surface Tools</span><span class="t n" style="left:981px;top:84px">Solid Tools</span><span class="t n" style="left:1053px;top:84px">Mesh Tools</span><span class="t n" style="left:1127px;top:84px">Render Tools</span><span class="t n" style="left:1211px;top:84px">Drafting</span><span class="t n" style="left:1267px;top:83px">New in V5</span>
<!-- snaps -->
<span class="t s" style="left:337px;top:653px">End</span><span class="t s" style="left:381px;top:653px">Near</span><span class="t s" style="left:428px;top:653px">Point</span><span class="t s" style="left:477px;top:653px">Mid</span><span class="t s" style="left:519px;top:653px">Cen</span><span class="t s" style="left:562px;top:653px">Int</span><span class="t s" style="left:600px;top:653px">Perp</span><span class="t s" style="left:647px;top:653px">Tan</span><span class="t s" style="left:690px;top:653px">Quad</span><span class="t s" style="left:743px;top:653px">Knot</span><span class="t s" style="left:789px;top:653px">Vertex</span><span class="t s" style="left:845px;top:653px">Project</span><span class="t s" style="left:902px;top:653px">Disable</span>
<!-- status -->
<span class="t" style="left:312px;top:685px">CPlane</span><span class="t" style="left:374px;top:685px">x -47.373</span><span class="t" style="left:453px;top:685px">y -14.361</span><span class="t" style="left:538px;top:685px">z 0.000</span><span class="t" style="left:609px;top:685px">Millimeters</span><span class="t" style="left:698px;top:685px">Varies</span><span class="t" style="left:844px;top:685px">Grid Snap</span><span class="t" style="left:913px;top:685px">Ortho</span><span class="t" style="left:956px;top:685px">Planar</span><span class="t" style="left:1005px;top:685px;font-weight:bold">Osnap</span><span class="t" style="left:1055px;top:685px">SmartTrack</span><span class="t" style="left:1132px;top:685px">Gumball</span><span class="t" style="left:1194px;top:685px;font-weight:bold">Record History</span><span class="t" style="left:1293px;top:685px">Filter</span><span class="t" style="left:1330px;top:685px">A...</span>
</body></html>
